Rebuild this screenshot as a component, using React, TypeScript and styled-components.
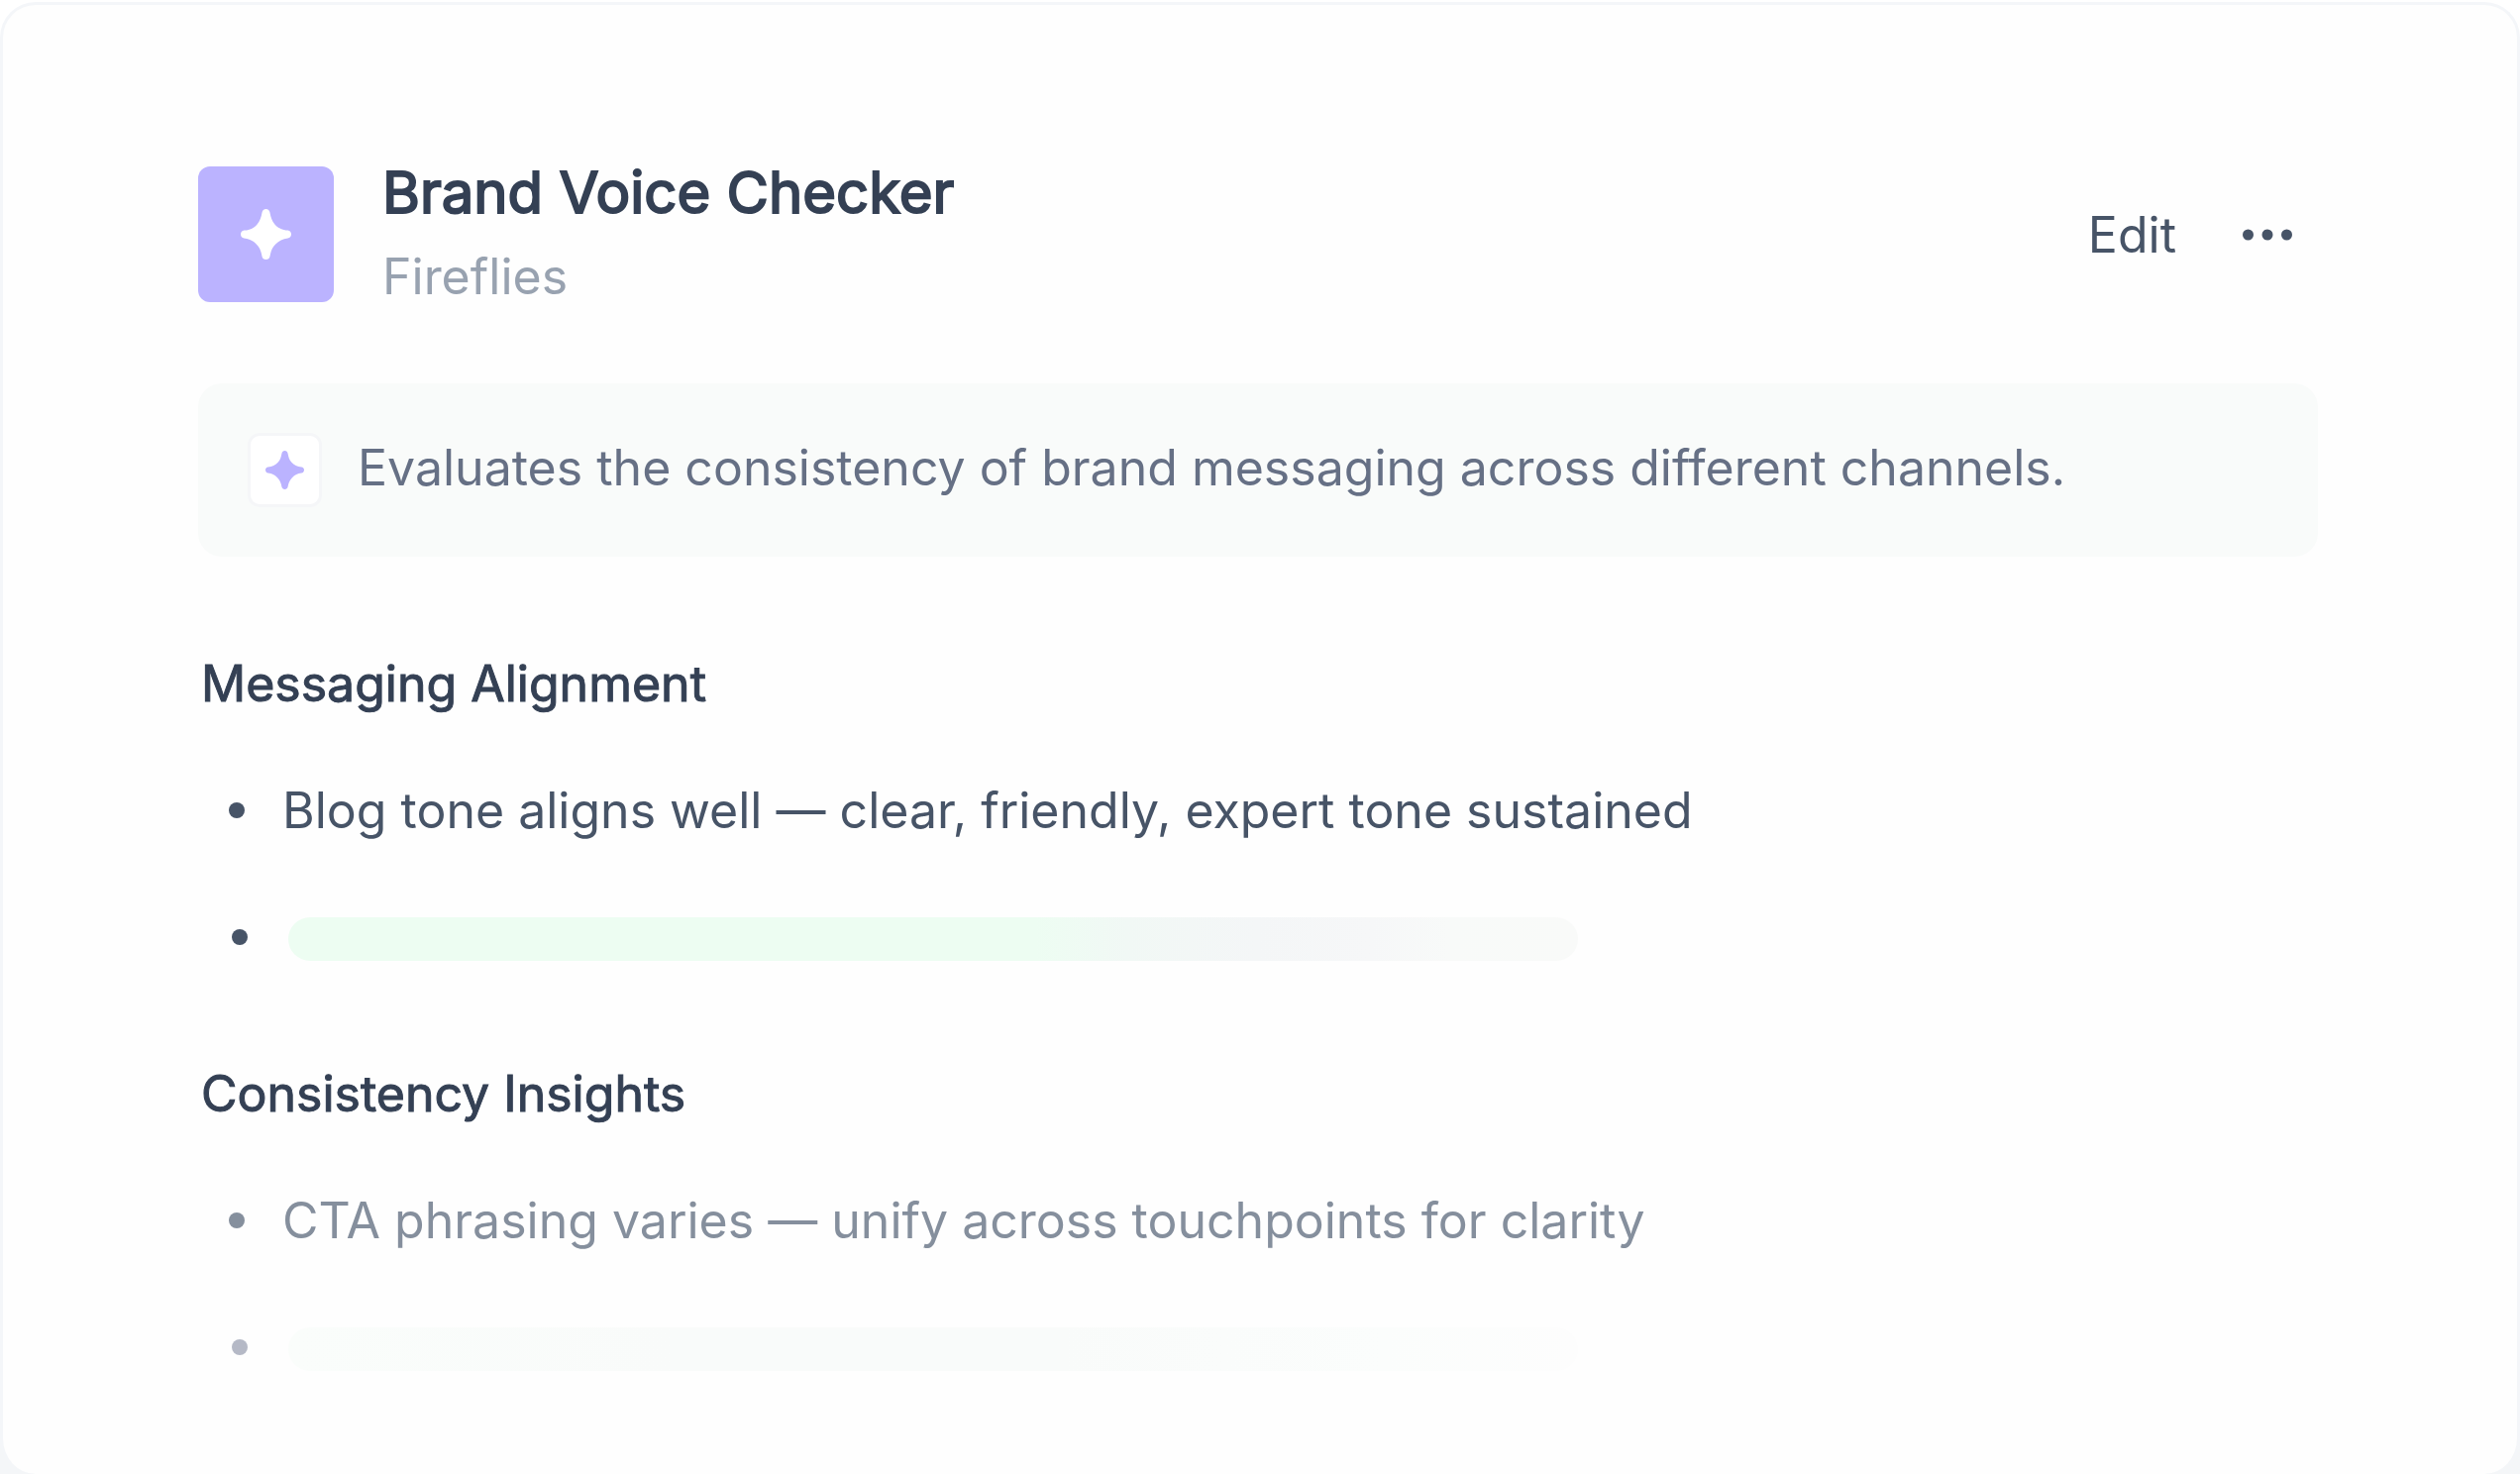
import React from "react";
import styled, { createGlobalStyle } from "styled-components";

const GlobalStyle = createGlobalStyle`
  *, *::before, *::after { box-sizing: border-box; }
  body {
    margin: 0;
    background: #ffffff;
    font-family: Inter, "Liberation Sans", sans-serif;
    color: #475467;
  }
  h1, h2, p, ul { margin: 0; padding: 0; }
`;

const Page = styled.div`
  display: flex;
  min-height: 100vh;
  padding-top: 2px;
  background: linear-gradient(#ffffff 50%, #f4f6f8 50%);
`;

const Card = styled.main`
  flex: 1;
  display: flex;
  flex-direction: column;
  padding: 157px 201px 64px 197px;
  border: 3px solid #f4f6f9;
  border-bottom: 0;
  border-radius: 36px;
  background: #fefefe;
`;

const Header = styled.header`
  display: flex;
  align-items: center;
  justify-content: space-between;
`;

const Identity = styled.div`
  display: flex;
  align-items: center;
  gap: 49px;
`;

const AppTile = styled.div`
  display: grid;
  place-items: center;
  width: 137px;
  height: 137px;
  border-radius: 12px;
  background: #bbb3ff;
`;

const Names = styled.div`
  display: flex;
  flex-direction: column;
  gap: 21px;
`;

const Title = styled.h1`
  font-size: 58px;
  line-height: 64px;
  font-weight: 400;
  -webkit-text-stroke: 2px currentColor;
  color: #344054;
`;

const Owner = styled.p`
  font-size: 50px;
  line-height: 64px;
  color: #98a2b0;
`;

const Actions = styled.div`
  display: flex;
  align-items: center;
  gap: 15px;
`;

const Button = styled.button`
  display: flex;
  align-items: center;
  padding: 0 26px;
  border: 0;
  background: none;
  font: inherit;
  font-size: 50px;
  line-height: 64px;
  color: #475467;
  cursor: pointer;
`;

const Banner = styled.section`
  display: flex;
  align-items: flex-start;
  gap: 36px;
  margin-top: 76px;
  padding: 50px;
  border-radius: 24px;
  background: #f9fbfa;
`;

const MiniTile = styled.div`
  display: grid;
  place-items: center;
  width: 75px;
  height: 75px;
  border: 3px solid #f5f6f8;
  border-radius: 12px;
  background: #ffffff;
`;

const Summary = styled.p`
  font-size: 50px;
  line-height: 70px;
  color: #667085;
`;

const Report = styled.div`
  display: flex;
  flex-direction: column;
  gap: 94px;
  margin-top: 96px;
`;

const Section = styled.section`
  display: flex;
  flex-direction: column;
  gap: 64px;
`;

const SectionTitle = styled.h2`
  padding-left: 3px;
  font-size: 50px;
  line-height: 64px;
  font-weight: 400;
  -webkit-text-stroke: 1px currentColor;
  color: #344054;
`;

const Findings = styled.ul`
  display: flex;
  flex-direction: column;
  gap: 64px;
  padding-left: 31px;
  list-style: none;
`;

const Finding = styled.li<{ $tone: string }>`
  display: flex;
  align-items: center;
  gap: 38px;
  min-height: 64px;
  font-size: 50px;
  line-height: 64px;
  color: ${(p) => p.$tone};

  &::before {
    content: "";
    width: 16px;
    height: 16px;
    border-radius: 50%;
    background: currentColor;
  }
`;

const Pending = styled(Finding)`
  gap: 41px;
  padding-left: 3px;
`;

const Placeholder = styled.span<{ $fill: string }>`
  width: 1302px;
  height: 44px;
  margin-top: 4px;
  border-radius: 22px;
  background: ${(p) => p.$fill};
`;

const Sparkle = ({ size, color }: { size: number; color: string }) => (
  <svg width={size} height={size} viewBox="0 0 51 51" aria-hidden="true">
    <path
      fill={color}
      d="M25.500 0C27.600 0 29 1.300 29.400 3.200C30.400 8.500 31.600 11.800 34.200 15.200C37.700 19.400 42 21.200 47.600 21.600C49.600 21.900 51 23.400 51 25.500C51 27.600 49.600 29.200 47.600 29.500C42.200 30.300 38.800 31.900 35.200 35.500C31.400 39.400 30.400 43 29.500 47.700C29 49.800 27.600 51 25.500 51C23.400 51 22 49.800 21.500 47.700C20.600 43 19.600 39.400 15.800 35.500C12.200 31.900 8.800 30.300 3.400 29.500C1.400 29.200 0 27.600 0 25.500C0 23.400 1.400 21.900 3.400 21.600C9 21.200 13.300 19.400 16.800 15.200C19.400 11.800 20.600 8.500 21.600 3.200C22 1.300 23.400 0 25.500 0Z"
    />
  </svg>
);

const Dots = () => (
  <svg width="50" height="12" viewBox="0 0 50 12" fill="currentColor" aria-hidden="true">
    <circle cx="5.500" cy="6" r="5.500" />
    <circle cx="25" cy="6" r="5.500" />
    <circle cx="44.500" cy="6" r="5.500" />
  </svg>
);

const sections = [
  {
    title: "Messaging Alignment",
    text: "Blog tone aligns well — clear, friendly, expert tone sustained",
    tone: "#475467",
    pendingTone: "#475467",
    fill: "linear-gradient(90deg, #edfdf2 0%, #edfdf2 58%, #f1f8f5 65%, #f4f6f7 75%, #f6f7f8 84%, #f8faf9 90%, #f9faf9 100%)",
  },
  {
    title: "Consistency Insights",
    text: "CTA phrasing varies — unify across touchpoints for clarity",
    tone: "#858f9d",
    pendingTone: "#b5b9c6",
    fill: "linear-gradient(90deg, #fafdfb 0%, #f9fbfa 30%, #f9fbfa 60%, #fbfdfc 85%, #fdfdfd 100%)",
  },
];

export default function App() {
  return (
    <>
      <GlobalStyle />
      <Page>
        <Card>
          <Header>
            <Identity>
              <AppTile>
                <Sparkle size={51} color="#ffffff" />
              </AppTile>
              <Names>
                <Title>Brand Voice Checker</Title>
                <Owner>Fireflies</Owner>
              </Names>
            </Identity>
            <Actions>
              <Button type="button">Edit</Button>
              <Button type="button" aria-label="More options">
                <Dots />
              </Button>
            </Actions>
          </Header>

          <Banner>
            <MiniTile>
              <Sparkle size={39} color="#bbb3ff" />
            </MiniTile>
            <Summary>Evaluates the consistency of brand messaging across different channels.</Summary>
          </Banner>

          <Report>
            {sections.map((s) => (
              <Section key={s.title}>
                <SectionTitle>{s.title}</SectionTitle>
                <Findings>
                  <Finding $tone={s.tone}>{s.text}</Finding>
                  <Pending $tone={s.pendingTone}>
                    <Placeholder $fill={s.fill} />
                  </Pending>
                </Findings>
              </Section>
            ))}
          </Report>
        </Card>
      </Page>
    </>
  );
}
